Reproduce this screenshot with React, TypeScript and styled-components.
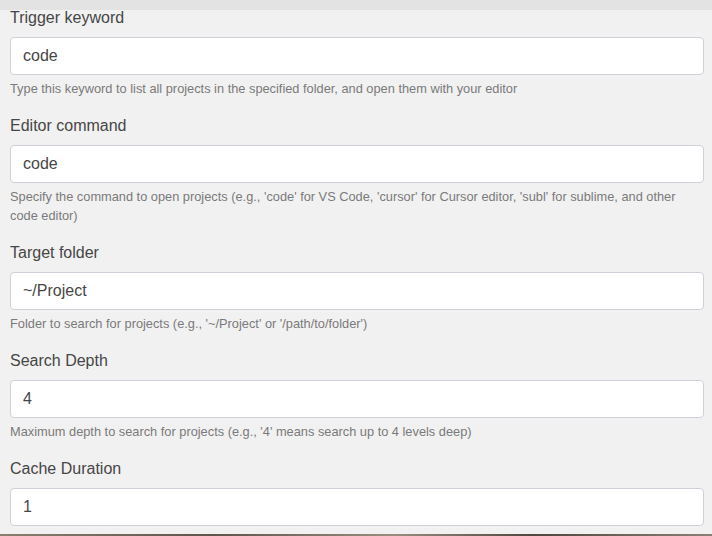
import styled, { createGlobalStyle } from "styled-components";

type Field = {
  label: string,
  value: string,
  help?: string,
}

const fields: Field[] = [
  {
    label: 'Trigger keyword',
    value: 'code',
    help: 'Type this keyword to list all projects in the specified folder, and open them with your editor',
  },
  {
    label: 'Editor command',
    value: 'code',
    help: "Specify the command to open projects (e.g., 'code' for VS Code, 'cursor' for Cursor editor, 'subl' for sublime, and other code editor)",
  },
  {
    label: 'Target folder',
    value: '~/Project',
    help: "Folder to search for projects (e.g., '~/Project' or '/path/to/folder')",
  },
  {
    label: 'Search Depth',
    value: '4',
    help: "Maximum depth to search for projects (e.g., '4' means search up to 4 levels deep)",
  },
  {
    label: 'Cache Duration',
    value: '1',
  },
];

const GlobalStyle = createGlobalStyle`
  html, body {
    margin: 0;
    padding: 0;
  }
  body {
    background: linear-gradient(90deg, #8a7e70, #5e554b 30%, #9a8d80 55%, #4f4740 75%, #8a8075);
    font-family: "Liberation Sans", Arial, sans-serif;
  }
`;

const Window = styled.div`
  width: 712px;
  height: 534px;
  background: #f1f1f1;
  overflow: hidden;
  display: flex;
  flex-direction: column;
`;

const TitleBar = styled.div`
  height: 10px;
  flex-shrink: 0;
  background: #e3e3e3;
`;

const Form = styled.div`
  padding: 0 8px 0 10px;
  display: flex;
  flex-direction: column;
`;

const Group = styled.div`
  display: flex;
  flex-direction: column;
  margin-bottom: 20px;
`;

const Label = styled.label`
  font-size: 16px;
  line-height: 16px;
  color: #464646;
  margin-bottom: 11px;
`;

const Input = styled.input`
  box-sizing: border-box;
  width: 100%;
  height: 38px;
  padding: 8px 12px;
  border: 1px solid #d0d0d8;
  border-radius: 4px;
  background: #ffffff;
  font-family: "Liberation Sans", Arial, sans-serif;
  font-size: 16px;
  color: #464646;
  outline: none;
`;

const Help = styled.div`
  margin-top: 4px;
  font-size: 12.8px;
  line-height: 19px;
  color: #7a7a7a;
`;

function App(): JSX.Element {
  return (
    <>
      <GlobalStyle />
      <Window>
        <TitleBar />
        <Form>
          {fields.map((f) => (
            <Group key={f.label}>
              <Label>{f.label}</Label>
              <Input defaultValue={f.value} />
              {f.help && <Help>{f.help}</Help>}
            </Group>
          ))}
        </Form>
      </Window>
    </>
  );
}

export default App;
